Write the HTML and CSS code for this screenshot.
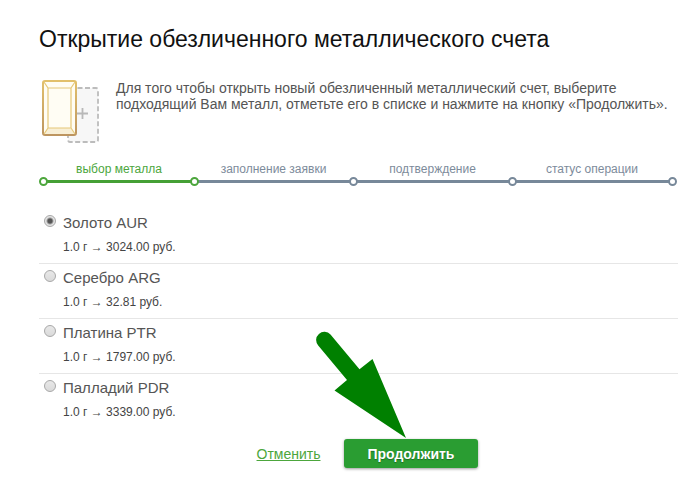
FILE: index.html
```
<!DOCTYPE html>
<html lang="ru">

<head>
    <meta charset="UTF-8">
    <meta name="viewport" content="width=device-width, initial-scale=1.0">
    <title>Открытие обезличенного металлического счета</title>
    <link rel="stylesheet" href="styles.css">
</head>

<body>
    <main class="page">
        <h1 class="page-title">Открытие обезличенного металлического счета</h1>

        <div class="intro">
            <svg class="intro-icon" width="58" height="64" viewBox="0 0 58 64" aria-hidden="true">
                <defs>
                    <linearGradient id="gold" x1="0" y1="0" x2="0" y2="1">
                        <stop offset="0" stop-color="#e2c06c" />
                        <stop offset="1" stop-color="#bd9560" />
                    </linearGradient>
                </defs>
                <rect x="27" y="8" width="30" height="54" rx="2" fill="#f7f7f7" stroke="#bcbcbc" stroke-width="1.8" stroke-dasharray="5 2.5" />
                <path d="M36 33.500h11M41.500 28v11" stroke="#b8b8b8" stroke-width="1.800" />
                <rect x="2" y="1" width="33" height="54" rx="2" fill="#fffdf4" stroke="url(#gold)" stroke-width="2" />
                <path d="M3 54l4-6h22l5 6z" fill="#f8efd6" />
                <path d="M3 2l4 6M34 2l-4 6M3 54l4-6M34 54l-4-6M7 8h23v40H7z" fill="none" stroke="#e6c878" stroke-width="1.200" />
            </svg>
            <p class="intro-text">Для того чтобы открыть новый обезличенный металлический счет, выберите подходящий Вам металл, отметьте его в списке и нажмите на кнопку «Продолжить».</p>
        </div>

        <ol class="steps">
            <li class="step active">выбор металла</li>
            <li class="step">заполнение заявки</li>
            <li class="step">подтверждение</li>
            <li class="step">статус операции</li>
        </ol>

        <form>
            <div class="metals">
                <div class="metal">
                    <input type="radio" id="aur" name="metal" checked>
                    <label for="aur">
                        <span class="metal-name">Золото AUR</span>
                        <span class="metal-rate">1.0 г → 3024.00 руб.</span>
                    </label>
                </div>
                <div class="metal">
                    <input type="radio" id="arg" name="metal">
                    <label for="arg">
                        <span class="metal-name">Серебро ARG</span>
                        <span class="metal-rate">1.0 г → 32.81 руб.</span>
                    </label>
                </div>
                <div class="metal">
                    <input type="radio" id="ptr" name="metal">
                    <label for="ptr">
                        <span class="metal-name">Платина PTR</span>
                        <span class="metal-rate">1.0 г → 1797.00 руб.</span>
                    </label>
                </div>
                <div class="metal">
                    <input type="radio" id="pdr" name="metal">
                    <label for="pdr">
                        <span class="metal-name">Палладий PDR</span>
                        <span class="metal-rate">1.0 г → 3339.00 руб.</span>
                    </label>
                </div>
            </div>

            <div class="actions">
                <a class="cancel-link" href="#">Отменить</a>
                <div class="submit-wrap">
                    <button class="submit-btn" type="button">Продолжить</button>
                    <svg class="pointer" width="90" height="108" viewBox="0 0 90 108" aria-hidden="true">
                        <path d="M2.200 14.500A8.200 8.200 0 0 1 14.500 3.600L43.500 38.200 56.500 28 90 107 18.500 59.500 31 49z" fill="#008000" />
                    </svg>
                </div>
            </div>
        </form>
    </main>
</body>

</html>
```
FILE: styles.css
```
body {
    margin: 0;
    background-color: #fff;
    color: #555;
    font-family: "Liberation Sans", Arial, sans-serif;
}

.page {
    padding: 24px 22px 20px 39px;
}

.page-title {
    margin: 0;
    color: #111;
    font-size: 23px;
    font-weight: normal;
    line-height: 30px;
}

/* Intro */
.intro {
    display: flex;
    gap: 17px;
    margin-top: 26px;
    padding-left: 2px;
}

.intro-icon {
    flex: none;
}

.intro-text {
    margin: 0;
    font-size: 14px;
    line-height: 16px;
}

/* Steps */
.steps {
    display: grid;
    grid-template-columns: 150fr 159fr 159fr 160fr;
    margin: 17px 6px 0 5px;
    padding: 0;
    list-style: none;
}

.step {
    position: relative;
    height: 19px;
    border-bottom: 3px solid #778899;
    color: #7d8b9b;
    font-size: 12px;
    line-height: 16px;
    text-align: center;
}

.step::after,
.step:first-child::before {
    content: "";
    position: absolute;
    right: -5px;
    bottom: -6px;
    z-index: 1;
    box-sizing: border-box;
    width: 9px;
    height: 9px;
    border: 2px solid #778899;
    border-radius: 50%;
    background-color: #fff;
}

.step:first-child::before {
    right: auto;
    left: -5px;
}

.step.active {
    border-color: #45a035;
    color: #4ca63c;
}

.step.active::before,
.step.active::after {
    border-color: #4ca63c;
}

/* Metals */
.metals {
    margin-top: 26px;
}

.metal {
    display: flex;
    gap: 7px;
    padding: 5px 0 8px 5px;
    border-bottom: 1px solid #e6e6e6;
}

.metal:last-child {
    border-bottom: none;
}

.metal input {
    appearance: none;
    flex: none;
    box-sizing: border-box;
    width: 12px;
    height: 12px;
    margin: 1px 0 0;
    border: 1px solid #a8a8a8;
    border-radius: 50%;
    background: linear-gradient(#e8e8e8, #dadada);
}

.metal input:checked {
    background: radial-gradient(circle, #555 2px, #e4e4e4 4px);
}

.metal-name,
.metal-rate {
    display: block;
}

.metal-name {
    font-size: 15px;
    line-height: 18px;
}

.metal-rate {
    margin-top: 7px;
    color: #444;
    font-size: 12px;
    line-height: 16px;
}

/* Actions */
.actions {
    display: flex;
    align-items: center;
    justify-content: center;
    gap: 23px;
    margin-top: 11px;
    padding-left: 18px;
}

.cancel-link {
    color: #4ca63c;
    font-size: 14px;
}

.submit-wrap {
    position: relative;
}

.submit-btn {
    display: block;
    height: 29px;
    padding: 0 24px;
    border: none;
    border-radius: 3px;
    background-color: #2a9d32;
    box-shadow: 0 1px 3px rgba(0, 0, 0, 0.4);
    color: #fff;
    font-family: inherit;
    font-size: 14px;
    font-weight: bold;
    text-shadow: 0 1px 1px rgba(0, 0, 0, 0.3);
    cursor: pointer;
}

/* Arrow pointing at the button */
.pointer {
    position: absolute;
    bottom: 100%;
    left: -28px;
    pointer-events: none;
}
```
